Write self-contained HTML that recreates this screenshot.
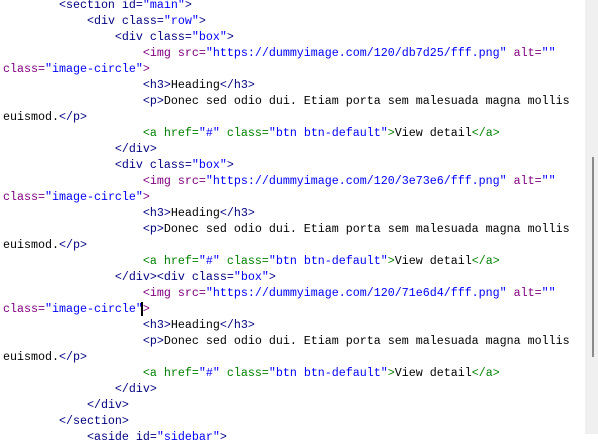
<!DOCTYPE html>
<html><head><style>
html,body{margin:0;padding:0;background:#fff;width:598px;height:434px;overflow:hidden}
pre{margin:0;position:absolute;left:3px;top:-3px;font-family:"Liberation Mono",monospace;font-size:11.67px;line-height:16px;color:#000}
.n{color:#000080}.p{color:#800080}.g{color:#008000}.s{color:#0000ff}
#sb{position:absolute;left:585px;top:0;width:13px;height:434px;background:#f0f0f0}
#th{position:absolute;left:592px;top:157px;width:2px;height:200px;background:#8a8a8a}
#cur{position:absolute;left:141px;top:302px;width:2px;height:14px;background:#000}
</style></head><body>
<pre>        <span class="n">&lt;section id=<span class="s">"main"</span>&gt;</span>
            <span class="n">&lt;div class=<span class="s">"row"</span>&gt;</span>
                <span class="n">&lt;div class=<span class="s">"box"</span>&gt;</span>
                    <span class="p">&lt;img src=<span class="s">"https://dummyimage.com/120/db7d25/fff.png"</span> alt=<span class="s">""</span></span>
<span class="p">class=<span class="s">"image-circle"</span>&gt;</span>
                    <span class="n">&lt;h3&gt;</span>Heading<span class="n">&lt;/h3&gt;</span>
                    <span class="n">&lt;p&gt;</span>Donec sed odio dui. Etiam porta sem malesuada magna mollis
euismod.<span class="n">&lt;/p&gt;</span>
                    <span class="g">&lt;a href=<span class="s">"#"</span> class=<span class="s">"btn btn-default"</span>&gt;</span>View detail<span class="g">&lt;/a&gt;</span>
                <span class="n">&lt;/div&gt;</span>
                <span class="n">&lt;div class=<span class="s">"box"</span>&gt;</span>
                    <span class="p">&lt;img src=<span class="s">"https://dummyimage.com/120/3e73e6/fff.png"</span> alt=<span class="s">""</span></span>
<span class="p">class=<span class="s">"image-circle"</span>&gt;</span>
                    <span class="n">&lt;h3&gt;</span>Heading<span class="n">&lt;/h3&gt;</span>
                    <span class="n">&lt;p&gt;</span>Donec sed odio dui. Etiam porta sem malesuada magna mollis
euismod.<span class="n">&lt;/p&gt;</span>
                    <span class="g">&lt;a href=<span class="s">"#"</span> class=<span class="s">"btn btn-default"</span>&gt;</span>View detail<span class="g">&lt;/a&gt;</span>
                <span class="n">&lt;/div&gt;&lt;div class=<span class="s">"box"</span>&gt;</span>
                    <span class="p">&lt;img src=<span class="s">"https://dummyimage.com/120/71e6d4/fff.png"</span> alt=<span class="s">""</span></span>
<span class="p">class=<span class="s">"image-circle"</span>&gt;</span>
                    <span class="n">&lt;h3&gt;</span>Heading<span class="n">&lt;/h3&gt;</span>
                    <span class="n">&lt;p&gt;</span>Donec sed odio dui. Etiam porta sem malesuada magna mollis
euismod.<span class="n">&lt;/p&gt;</span>
                    <span class="g">&lt;a href=<span class="s">"#"</span> class=<span class="s">"btn btn-default"</span>&gt;</span>View detail<span class="g">&lt;/a&gt;</span>
                <span class="n">&lt;/div&gt;</span>
            <span class="n">&lt;/div&gt;</span>
        <span class="n">&lt;/section&gt;</span>
            <span class="n">&lt;aside id=<span class="s">"sidebar"</span>&gt;</span></pre>
<div id="cur"></div>
<div id="sb"></div><div id="th"></div>
</body></html>
